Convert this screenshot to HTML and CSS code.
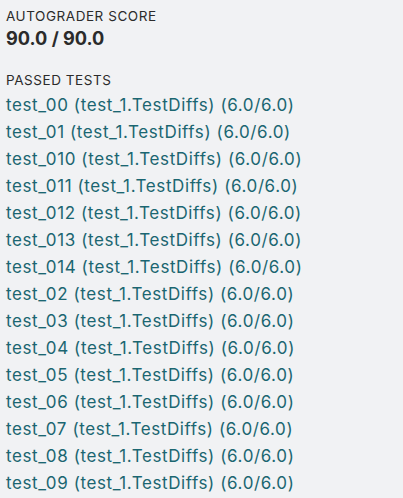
FILE: index.html
```html
<!DOCTYPE html>
<html>
<head>
<meta charset="utf-8">
<link rel="stylesheet" href="styles.css">
</head>
<body>
<div class="page">
  <section class="score">
    <div class="label">AUTOGRADER SCORE</div>
    <div class="value">90.0 / 90.0</div>
  </section>
  <section class="tests">
    <div class="label">PASSED TESTS</div>
    <ul class="list">
      <li>test_00 (test_1.TestDiffs) (6.0/6.0)</li>
      <li>test_01 (test_1.TestDiffs) (6.0/6.0)</li>
      <li>test_010 (test_1.TestDiffs) (6.0/6.0)</li>
      <li>test_011 (test_1.TestDiffs) (6.0/6.0)</li>
      <li>test_012 (test_1.TestDiffs) (6.0/6.0)</li>
      <li>test_013 (test_1.TestDiffs) (6.0/6.0)</li>
      <li>test_014 (test_1.TestDiffs) (6.0/6.0)</li>
      <li>test_02 (test_1.TestDiffs) (6.0/6.0)</li>
      <li>test_03 (test_1.TestDiffs) (6.0/6.0)</li>
      <li>test_04 (test_1.TestDiffs) (6.0/6.0)</li>
      <li>test_05 (test_1.TestDiffs) (6.0/6.0)</li>
      <li>test_06 (test_1.TestDiffs) (6.0/6.0)</li>
      <li>test_07 (test_1.TestDiffs) (6.0/6.0)</li>
      <li>test_08 (test_1.TestDiffs) (6.0/6.0)</li>
      <li>test_09 (test_1.TestDiffs) (6.0/6.0)</li>
    </ul>
  </section>
</div>
</body>
</html>
```
FILE: styles.css
```css
html, body {
  margin: 0;
  padding: 0;
  background: #f1f2f4;
}
.page {
  padding: 6px 6px 0 6px;
  font-family: Inter, "Open Sans", "Liberation Sans", sans-serif;
  color: #2b2b2b;
}
.label {
  font-size: 13.5px;
  line-height: 20px;
  letter-spacing: 0.55px;
}
.value {
  font-size: 18.2px;
  font-weight: 700;
  line-height: 24px;
}
.tests {
  margin-top: 20px;
}
.list {
  list-style: none;
  margin: 2px 0 0 0;
  padding: 0;
}
.list li {
  font-size: 17px;
  line-height: 27px;
  letter-spacing: 0.6px;
  color: #1b6671;
}
```
